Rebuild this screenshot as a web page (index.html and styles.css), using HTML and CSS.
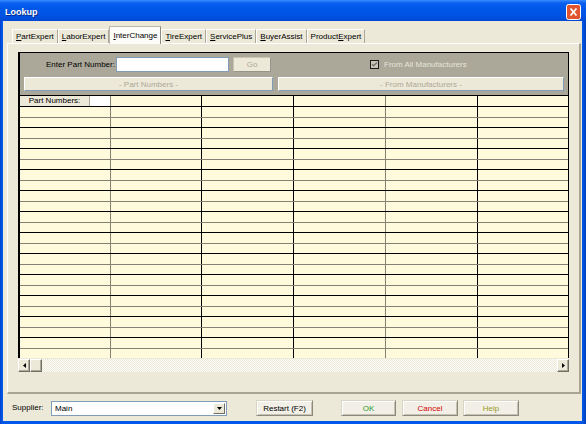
FILE: index.html
```html
<!DOCTYPE html>
<html>
<head>
<meta charset="utf-8">
<title>Lookup</title>
<link rel="stylesheet" href="styles.css">
</head>
<body>
<div class="window">
  <div class="titlebar">
    <span class="title">Lookup</span>
    <div class="close">
      <svg width="15" height="16" viewBox="0 0 15 16"><rect x="0.5" y="0.5" width="14" height="15" rx="2" fill="#e0542f" stroke="#fff"/><path d="M4.5 4.5 L10.5 11.5 M10.5 4.5 L4.5 11.5" stroke="#fff" stroke-width="1.8"/></svg>
    </div>
  </div>
  <div class="client">
    <div class="tabs">
      <div class="tab"><u>P</u>artExpert</div>
      <div class="tab"><u>L</u>aborExpert</div>
      <div class="tab active"><u>I</u>nterChange</div>
      <div class="tab"><u>T</u>ireExpert</div>
      <div class="tab"><u>S</u>ervicePlus</div>
      <div class="tab"><u>B</u>uyerAssist</div>
      <div class="tab">Product<u>E</u>xpert</div>
    </div>
    <div class="panel">
      <div class="gridctrl">
        <div class="gridbox">
          <div class="toolbar">
            <div class="tb-row1">
              <span class="pn-label">Enter Part Number:</span>
              <div class="pn-input"></div>
              <div class="btn-go">Go</div>
              <div class="chk">
                <svg class="chk-box" width="9" height="9" viewBox="0 0 9 9"><rect x="0.5" y="0.5" width="8" height="8" fill="#c9c6b9" stroke="#1a1a1a"/><path d="M2 4.2 L3.6 5.8 L7 2.4" fill="none" stroke="#77746a" stroke-width="1.4"/></svg>
                <span class="chk-label">From All Manufacturers</span>
              </div>
            </div>
            <div class="tb-row2">
              <div class="bar bar-left">- Part Numbers -</div>
              <div class="bar bar-right">- From Manufacturers -</div>
            </div>
          </div>
          <div class="table">
            <div class="row header">
              <div class="cell c1"><span class="hdr-label">Part Numbers:</span><span class="hdr-white"></span></div>
              <div class="cell c2"></div><div class="cell c3"></div><div class="cell c4"></div><div class="cell c5"></div><div class="cell c6"></div>
            </div>
            <div class="row odd"><div class="cell c1"></div><div class="cell c2"></div><div class="cell c3"></div><div class="cell c4"></div><div class="cell c5"></div><div class="cell c6"></div></div>
            <div class="row even"><div class="cell c1"></div><div class="cell c2"></div><div class="cell c3"></div><div class="cell c4"></div><div class="cell c5"></div><div class="cell c6"></div></div>
            <div class="row odd"><div class="cell c1"></div><div class="cell c2"></div><div class="cell c3"></div><div class="cell c4"></div><div class="cell c5"></div><div class="cell c6"></div></div>
            <div class="row even"><div class="cell c1"></div><div class="cell c2"></div><div class="cell c3"></div><div class="cell c4"></div><div class="cell c5"></div><div class="cell c6"></div></div>
            <div class="row odd"><div class="cell c1"></div><div class="cell c2"></div><div class="cell c3"></div><div class="cell c4"></div><div class="cell c5"></div><div class="cell c6"></div></div>
            <div class="row even"><div class="cell c1"></div><div class="cell c2"></div><div class="cell c3"></div><div class="cell c4"></div><div class="cell c5"></div><div class="cell c6"></div></div>
            <div class="row odd"><div class="cell c1"></div><div class="cell c2"></div><div class="cell c3"></div><div class="cell c4"></div><div class="cell c5"></div><div class="cell c6"></div></div>
            <div class="row even"><div class="cell c1"></div><div class="cell c2"></div><div class="cell c3"></div><div class="cell c4"></div><div class="cell c5"></div><div class="cell c6"></div></div>
            <div class="row odd"><div class="cell c1"></div><div class="cell c2"></div><div class="cell c3"></div><div class="cell c4"></div><div class="cell c5"></div><div class="cell c6"></div></div>
            <div class="row even"><div class="cell c1"></div><div class="cell c2"></div><div class="cell c3"></div><div class="cell c4"></div><div class="cell c5"></div><div class="cell c6"></div></div>
            <div class="row odd"><div class="cell c1"></div><div class="cell c2"></div><div class="cell c3"></div><div class="cell c4"></div><div class="cell c5"></div><div class="cell c6"></div></div>
            <div class="row even"><div class="cell c1"></div><div class="cell c2"></div><div class="cell c3"></div><div class="cell c4"></div><div class="cell c5"></div><div class="cell c6"></div></div>
            <div class="row odd"><div class="cell c1"></div><div class="cell c2"></div><div class="cell c3"></div><div class="cell c4"></div><div class="cell c5"></div><div class="cell c6"></div></div>
            <div class="row even"><div class="cell c1"></div><div class="cell c2"></div><div class="cell c3"></div><div class="cell c4"></div><div class="cell c5"></div><div class="cell c6"></div></div>
            <div class="row odd"><div class="cell c1"></div><div class="cell c2"></div><div class="cell c3"></div><div class="cell c4"></div><div class="cell c5"></div><div class="cell c6"></div></div>
            <div class="row even"><div class="cell c1"></div><div class="cell c2"></div><div class="cell c3"></div><div class="cell c4"></div><div class="cell c5"></div><div class="cell c6"></div></div>
            <div class="row odd"><div class="cell c1"></div><div class="cell c2"></div><div class="cell c3"></div><div class="cell c4"></div><div class="cell c5"></div><div class="cell c6"></div></div>
            <div class="row even"><div class="cell c1"></div><div class="cell c2"></div><div class="cell c3"></div><div class="cell c4"></div><div class="cell c5"></div><div class="cell c6"></div></div>
            <div class="row odd"><div class="cell c1"></div><div class="cell c2"></div><div class="cell c3"></div><div class="cell c4"></div><div class="cell c5"></div><div class="cell c6"></div></div>
            <div class="row even"><div class="cell c1"></div><div class="cell c2"></div><div class="cell c3"></div><div class="cell c4"></div><div class="cell c5"></div><div class="cell c6"></div></div>
            <div class="row odd"><div class="cell c1"></div><div class="cell c2"></div><div class="cell c3"></div><div class="cell c4"></div><div class="cell c5"></div><div class="cell c6"></div></div>
            <div class="row even"><div class="cell c1"></div><div class="cell c2"></div><div class="cell c3"></div><div class="cell c4"></div><div class="cell c5"></div><div class="cell c6"></div></div>
            <div class="row odd"><div class="cell c1"></div><div class="cell c2"></div><div class="cell c3"></div><div class="cell c4"></div><div class="cell c5"></div><div class="cell c6"></div></div>
            <div class="row even"><div class="cell c1"></div><div class="cell c2"></div><div class="cell c3"></div><div class="cell c4"></div><div class="cell c5"></div><div class="cell c6"></div></div>
          </div>
        </div>
        <div class="hscroll">
          <div class="sbtn"><svg width="3" height="5" viewBox="0 0 3 5"><path d="M3 0 L0 2.5 L3 5 Z" fill="#000"/></svg></div>
          <div class="sbtn thumb"></div>
          <div class="track"></div>
          <div class="sbtn"><svg width="3" height="5" viewBox="0 0 3 5"><path d="M0 0 L3 2.5 L0 5 Z" fill="#000"/></svg></div>
        </div>
      </div>
    </div>
    <div class="footer">
      <span class="sup-label">Supplier:</span>
      <div class="combo">
        <span class="combo-text">Main</span>
        <div class="combo-btn"><svg width="5" height="3" viewBox="0 0 5 3"><path d="M0 0 L5 0 L2.5 3 Z" fill="#000"/></svg></div>
      </div>
      <div class="btn btn-restart">Restart (F2)</div>
      <div class="btn btn-ok">OK</div>
      <div class="btn btn-cancel">Cancel</div>
      <div class="btn btn-help">Help</div>
    </div>
  </div>
</div>
</body>
</html>
```

FILE: styles.css
```css
* { box-sizing: border-box; }

html, body {
  margin: 0;
  padding: 0;
  background: #0054e3;
}

body {
  font-family: "Liberation Sans", Arial, sans-serif;
  font-size: 8px;
  color: #000;
}

.window {
  width: 586px;
  height: 424px;
  display: flex;
  flex-direction: column;
  background: linear-gradient(90deg, #0040c8 0, #0058ea 2px, #0058ea 582px, #0040c0 586px);
  overflow: hidden;
}

.titlebar {
  height: 21px;
  flex: none;
  display: flex;
  align-items: center;
  justify-content: space-between;
  padding: 0 5px 0 5px;
  background: linear-gradient(180deg, #3a8cff 0, #0a60f0 3px, #0058e8 8px, #0054e3 15px, #0048d4 21px);
}

.title {
  color: #fff;
  font-weight: bold;
  font-size: 9px;
  padding-top: 2px;
  text-shadow: 1px 1px 0 #0a2a8a;
}

.close {
  width: 15px;
  height: 16px;
  margin-top: 2px;
  display: flex;
}

.client {
  margin: 0 4px 0 3px;
  height: 400px;
  background: #ece9d8;
  display: flex;
  flex-direction: column;
}

/* Tabs */
.tabs {
  height: 22px;
  flex: none;
  display: flex;
  align-items: flex-end;
  padding-left: 9px;
  position: relative;
  z-index: 1;
}

.tab {
  height: 14px;
  padding: 2px 3px 0 3px;
  border-left: 1px solid #fff;
  border-right: 1px solid #aca899;
  border-top: 1px solid #fff;
  white-space: nowrap;
  line-height: 10px;
  background: #ece9d8;
}

.tab.active {
  height: 18px;
  padding-top: 4px;
  margin-bottom: -1px;
  background: #fcfcf9;
  border-left: 1px solid #bcb8a8;
  border-right: 1px solid #8e8b7e;
  border-top: 1px solid #bcb8a8;
}

.panel {
  margin-left: 4px;
  width: 574px;
  height: 351px;
  flex: none;
  border-top: 1px solid #fff;
  border-left: 1px solid #fff;
  border-right: 2px solid #a7a493;
  border-bottom: 2px solid #a7a493;
  padding: 8px 0 0 10px;
}

/* Grid control */
.gridctrl {
  width: 551px;
  display: flex;
  flex-direction: column;
}

.gridbox {
  height: 306px;
  border-top: 1px solid #000;
  border-left: 2px solid #000;
  border-right: 1px solid #000;
  display: flex;
  flex-direction: column;
}

.toolbar {
  height: 42px;
  flex: none;
  background: #aca899;
  padding: 4px 0 0 0;
}

.tb-row1 {
  height: 15px;
  display: flex;
  align-items: center;
}

.pn-label {
  margin-left: 26px;
  width: 70px;
  white-space: nowrap;
}

.pn-input {
  width: 113px;
  height: 15px;
  background: #fff;
  border: 1px solid #7f9db9;
}

.btn-go {
  margin-left: 4px;
  width: 38px;
  height: 15px;
  background: #ece9d8;
  border: 1px solid #c9c6b6;
  border-right-color: #97948a;
  border-bottom-color: #97948a;
  color: #aca899;
  display: flex;
  align-items: center;
  justify-content: center;
}

.chk {
  margin-left: 99px;
  display: flex;
  align-items: center;
  gap: 5px;
}

.chk-box { display: block; }

.chk-label {
  color: #e6e4da;
  white-space: nowrap;
}

.tb-row2 {
  margin-top: 5px;
  height: 14px;
  display: flex;
  gap: 5px;
  padding-left: 4px;
}

.bar {
  height: 14px;
  background: #ece9d8;
  border: 1px solid #fff;
  border-right-color: #7f9db9;
  border-bottom-color: #7f9db9;
  color: #aca899;
  display: flex;
  align-items: center;
  justify-content: center;
  white-space: nowrap;
}

.bar-left { width: 249px; }
.bar-right { width: 286px; }

/* Table */
.table {
  flex: 1;
  border-top: 1px solid #000;
  overflow: hidden;
  background: #fffadc;
}

.row {
  display: flex;
  height: 10.5px;
  border-bottom: 1px solid #000;
}

.row.header {
  height: 11px;
}

.row.odd { border-bottom-color: #858275; }
.row.even { border-bottom-color: #000; }

.cell {
  height: 100%;
  background: #fffadc;
}

.c1 { width: 91px; border-right: 1px solid #858275; }
.c2 { width: 91px; border-right: 1px solid #000; }
.c3 { width: 92px; border-right: 1px solid #000; }
.c4 { width: 92px; border-right: 1px solid #858275; }
.c5 { width: 92px; border-right: 1px solid #000; }
.c6 { flex: 1; }

.header .c1 {
  display: flex;
}

.hdr-label {
  width: 70px;
  background: #ece9d8;
  border-right: 1px solid #aca899;
  text-align: center;
  line-height: 10px;
  white-space: nowrap;
}

.hdr-white {
  flex: 1;
  background: #fff;
}

/* Horizontal scrollbar */
.hscroll {
  height: 13px;
  margin-top: 1px;
  display: flex;
}

.sbtn {
  width: 12px;
  height: 13px;
  flex: none;
  background: #ece9d8;
  border: 1px solid #fff;
  border-right-color: #716f64;
  border-bottom-color: #716f64;
  box-shadow: inset -1px -1px 0 #aca899;
  display: flex;
  align-items: center;
  justify-content: center;
}

.track {
  flex: 1;
  background: repeating-conic-gradient(#ece9d8 0 25%, #fcfcf8 0 50%) 0 0 / 2px 2px;
}

/* Footer */
.footer {
  flex: 1;
  display: flex;
  align-items: flex-start;
  padding: 6px 0 0 9px;
}

.sup-label {
  width: 39px;
  height: 16px;
  line-height: 16px;
  white-space: nowrap;
}

.combo {
  width: 176px;
  height: 15px;
  margin-top: 1px;
  background: #fff;
  border: 1px solid #7f9db9;
  display: flex;
  align-items: center;
  justify-content: space-between;
  padding: 0 1px 0 3px;
}

.combo-btn {
  width: 12px;
  height: 11px;
  background: #ece9d8;
  border: 1px solid #fff;
  border-right-color: #716f64;
  border-bottom-color: #716f64;
  display: flex;
  align-items: center;
  justify-content: center;
}

.btn {
  height: 16px;
  background: #f1efe6;
  border: 1px solid #d9d6c8;
  border-right-color: #8c897c;
  border-bottom-color: #8c897c;
  box-shadow: inset 1px 1px 0 #fff, inset -1px -1px 0 #c5c2b3;
  display: flex;
  align-items: center;
  justify-content: center;
  white-space: nowrap;
}

.btn-restart { margin-left: 29px; width: 57px; }
.btn-ok { margin-left: 28px; width: 55px; color: #2f9a2f; }
.btn-cancel { margin-left: 6px; width: 56px; color: #d40000; }
.btn-help { margin-left: 5px; width: 56px; color: #9a9a2a; }
```
